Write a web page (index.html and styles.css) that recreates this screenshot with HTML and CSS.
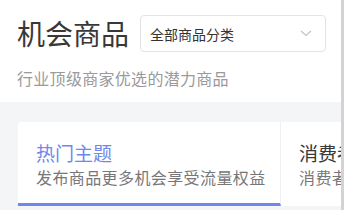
FILE: index.html
```html
<!DOCTYPE html>
<html lang="zh">
<head>
<meta charset="utf-8">
<link rel="stylesheet" href="styles.css">
</head>
<body>
<div class="page">
  <div class="main">
    <header class="header">
      <div class="title-row">
        <h1 class="title">机会商品</h1>
        <div class="select">
          <span class="select-text">全部商品分类</span>
          <svg class="chevron" width="12" height="7" viewBox="0 0 12 7"><path d="M1 1 L6 5.5 L11 1" fill="none" stroke="#c4c4c4" stroke-width="1.2"/></svg>
        </div>
      </div>
      <p class="subtitle">行业顶级商家优选的潜力商品</p>
    </header>
    <div class="cards">
      <div class="card active">
        <div class="card-title">热门主题</div>
        <div class="card-desc">发布商品更多机会享受流量权益</div>
      </div>
      <div class="card">
        <div class="card-title">消费者权益</div>
        <div class="card-desc">消费者专享更多优惠</div>
      </div>
    </div>
  </div>
  <div class="scrollbar"></div>
</div>
</body>
</html>
```
FILE: styles.css
```css
html, body {
  margin: 0;
  padding: 0;
}
body {
  width: 344px;
  height: 210px;
  overflow: hidden;
  background: #f4f5f7;
  font-family: "Noto Sans CJK SC", "Noto Sans", sans-serif;
}
.page {
  display: flex;
  height: 210px;
}
.main {
  flex: 1;
  min-width: 0;
  overflow: hidden;
}
.scrollbar {
  width: 3px;
  background: #d2d3d6;
}
.header {
  background: #ffffff;
  height: 102px;
  padding: 15px 0 0 17px;
  box-sizing: border-box;
}
.title-row {
  display: flex;
  align-items: center;
}
.title {
  margin: 0;
  font-size: 28px;
  font-weight: 400;
  line-height: 37px;
  color: #383838;
}
.select {
  margin-left: 11px;
  width: 186px;
  height: 37px;
  box-sizing: border-box;
  border: 1px solid #e3e3e6;
  border-radius: 4px;
  display: flex;
  align-items: center;
  justify-content: space-between;
  padding: 0 13px 0 9px;
}
.select-text {
  font-size: 14px;
  color: #333333;
}
.chevron {
  display: block;
}
.subtitle {
  margin: 15px 0 0;
  font-size: 16px;
  letter-spacing: 0.3px;
  line-height: 22px;
  color: #9a9a9a;
}
.cards {
  display: flex;
  margin-top: 20px;
  padding-left: 18px;
}
.card {
  flex: none;
  background: #ffffff;
  padding: 18px 18px 15px;
  border-bottom: 3px solid transparent;
  white-space: nowrap;
}
.card.active {
  width: 263px;
  box-sizing: border-box;
  border-bottom-color: #6e86ee;
  border-radius: 4px 0 0 0;
  border-right: 1px solid #f0f0f2;
}
.card-title {
  font-size: 19px;
  line-height: 26px;
  color: #383838;
}
.card.active .card-title {
  color: #6f87ee;
}
.card-desc {
  font-size: 16px;
  letter-spacing: 0.4px;
  line-height: 22px;
  color: #777777;
}
```
